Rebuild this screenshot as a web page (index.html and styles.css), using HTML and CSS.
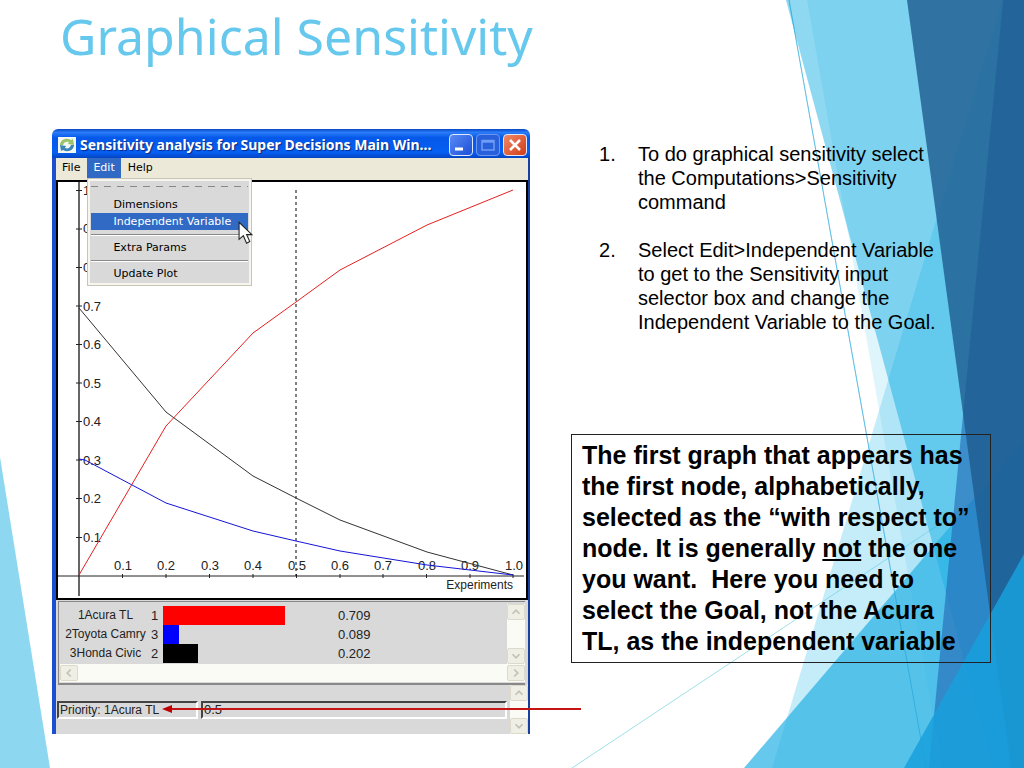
FILE: index.html
```html
<!DOCTYPE html>
<html lang="en">
<head>
    <meta charset="UTF-8">
    <meta name="viewport" content="width=device-width, initial-scale=1.0">
    <title>Graphical Sensitivity</title>
    <link rel="stylesheet" href="styles.css">
</head>
<body>
    <div class="slide">
        <svg class="backdrop" viewBox="0 0 1024 768" preserveAspectRatio="none" aria-hidden="true">
            <polygon points="0,457 50,768 0,768" fill="#8dd8f0"/>
            <path d="M789 0L926 768" stroke="#7ccfee" fill="none"/>
            <path d="M572 768L1024 468" stroke="#9fe0ea" fill="none"/>
            <polygon points="1002,0 1024,0 1024,768 772,768" fill="#5fcbef" fill-opacity=".36"/>
            <polygon points="807,0 1024,0 1024,768 942,768" fill="#5fcbef" fill-opacity=".2"/>
            <polygon points="786,0 1024,0 1024,768 993,768" fill="#06a8e0" fill-opacity=".45"/>
            <polygon points="744,768 1024,440 1024,768" fill="#25b1e4" fill-opacity=".7"/>
            <polygon points="1003,0 1024,0 1024,768 929,768" fill="#2366b2" fill-opacity=".6"/>
            <polygon points="907,0 1024,0 1024,768 1011,768" fill="#1d5b8f" fill-opacity=".8"/>
            <polygon points="904,768 1024,554 1024,768" fill="#19a0dd" fill-opacity=".85"/>
            <path d="M789 0L926 768" stroke="#2a9fd0" stroke-opacity=".35" fill="none"/>
        </svg>

        <div class="content">
            <h1>Graphical Sensitivity</h1>

            <main>
                <section class="window">
                    <header class="titlebar">
                        <svg class="app-icon" viewBox="0 0 18 16">
                            <rect width="18" height="16" fill="#f4f8f4"/>
                            <path d="M2 8C2 3 8 0 13 3L15 2L16 8L10 7L11 5C8 4 6 5 5 8Z" fill="#9bc46a"/>
                            <path d="M16 8C16 13 10 16 5 13L3 14L2 8L8 9L7 11C10 12 12 11 13 8Z" fill="#3a86b8"/>
                        </svg>
                        <h2>Sensitivity analysis for Super Decisions Main Win...</h2>
                        <div class="controls">
                            <button class="control" aria-label="Minimize">
                                <svg viewBox="0 0 20 20"><path d="M4 14H12" stroke="#fff" stroke-width="3"/></svg>
                            </button>
                            <button class="control maximize" aria-label="Maximize" disabled>
                                <svg viewBox="0 0 20 20"><path d="M4 5.500H16V15H4ZM4 7H16" stroke="#6f9df5" stroke-width="1.500" fill="none"/></svg>
                            </button>
                            <button class="control close" aria-label="Close">
                                <svg viewBox="0 0 20 20"><path d="M5 5L15 15M15 5L5 15" stroke="#fff" stroke-width="2.500"/></svg>
                            </button>
                        </div>
                    </header>

                    <div class="window-body">
                        <nav class="menubar">
                            <button>File</button>
                            <div class="menu-open">
                                <button class="active">Edit</button>
                                <div class="dropdown">
                                    <div class="tearoff"></div>
                                    <button>Dimensions</button>
                                    <button class="active">Independent Variable</button>
                                    <hr>
                                    <button>Extra Params</button>
                                    <hr>
                                    <button>Update Plot</button>
                                    <svg class="cursor" viewBox="0 0 14 22"><path d="M1 1V17L5 13.500L8 20.500L11 19L8 12.500H13Z" fill="#fff" stroke="#222"/></svg>
                                </div>
                            </div>
                            <button>Help</button>
                        </nav>

                        <svg class="chart" viewBox="56 180 472 420">
                            <rect x="57" y="181" width="470" height="418" fill="#fff" stroke="#000" stroke-width="2"/>
                            <g class="axis">
                                <path d="M79 182V596" stroke-width="2" stroke="#666"/>
                                <path d="M58 576H524"/>
                                <path d="M76 190.500H82M76 229H82M76 267.500H82M76 306H82M76 344.500H82M76 383H82M76 421.500H82M76 460H82M76 498.500H82M76 537.500H82"/>
                                <path d="M122.500 574V578M166 574V578M209.500 574V578M253 574V578M296.500 574V578M340 574V578M383 574V578M426.500 574V578M470 574V578M513 574V578"/>
                            </g>
                            <g class="y-labels">
                                <text x="83" y="195">1.0</text>
                                <text x="83" y="233">0.9</text>
                                <text x="83" y="272">0.8</text>
                                <text x="83" y="311">0.7</text>
                                <text x="83" y="349">0.6</text>
                                <text x="83" y="388">0.5</text>
                                <text x="83" y="426">0.4</text>
                                <text x="83" y="465">0.3</text>
                                <text x="83" y="503">0.2</text>
                                <text x="83" y="542">0.1</text>
                            </g>
                            <g class="x-labels">
                                <text x="123" y="570">0.1</text>
                                <text x="166" y="570">0.2</text>
                                <text x="210" y="570">0.3</text>
                                <text x="253" y="570">0.4</text>
                                <text x="297" y="570">0.5</text>
                                <text x="340" y="570">0.6</text>
                                <text x="383" y="570">0.7</text>
                                <text x="427" y="570">0.8</text>
                                <text x="470" y="570">0.9</text>
                                <text x="514" y="570">1.0</text>
                            </g>
                            <text class="axis-name" x="513" y="589">Experiments</text>
                            <path d="M296 190V576" stroke="#000" stroke-dasharray="3 3"/>
                            <g class="series">
                                <polyline stroke="#333" points="79,308 166,412 253,476 296,498 340,520 427,552 513,575"/>
                                <polyline stroke="#1414d8" points="79,459 85,460 166,503 253,531 296,541 340,551 427,565 513,575"/>
                                <polyline stroke="#e62020" points="79,575 166,426 253,333 296,302 340,270 427,225 513,190"/>
                            </g>
                        </svg>

                        <div class="results">
                            <table>
                                <tr><th>1Acura TL</th><td class="rank">1</td><td class="bar-cell"><div class="bar red" style="width:122px"></div></td><td>0.709</td></tr>
                                <tr><th>2Toyota Camry</th><td class="rank">3</td><td class="bar-cell"><div class="bar blue" style="width:16px"></div></td><td>0.089</td></tr>
                                <tr><th>3Honda Civic</th><td class="rank">2</td><td class="bar-cell"><div class="bar black" style="width:35px"></div></td><td>0.202</td></tr>
                            </table>
                            <div class="scroll-v">
                                <button aria-label="Scroll up"><svg viewBox="0 0 16 16"><path d="M4 10L8 6L12 10"/></svg></button>
                                <button aria-label="Scroll down"><svg viewBox="0 0 16 16"><path d="M4 6L8 10L12 6"/></svg></button>
                            </div>
                            <div class="scroll-h">
                                <button aria-label="Scroll left"><svg viewBox="0 0 16 16"><path d="M10 4L6 8L10 12"/></svg></button>
                                <button aria-label="Scroll right"><svg viewBox="0 0 16 16"><path d="M6 4L10 8L6 12"/></svg></button>
                            </div>
                        </div>

                        <div class="status">
                            <label for="priority">Priority: 1Acura TL</label>
                            <input type="text" id="priority" value="0.5">
                            <div class="scroll-v">
                                <button aria-label="Scroll up"><svg viewBox="0 0 16 16"><path d="M4 10L8 6L12 10"/></svg></button>
                                <button aria-label="Scroll down"><svg viewBox="0 0 16 16"><path d="M4 6L8 10L12 6"/></svg></button>
                            </div>
                            <svg class="arrow" viewBox="0 0 420 10">
                                <path d="M8 5H419" stroke="#c41414" stroke-width="2"/>
                                <path d="M0 5L10 1V9Z" fill="#c00000"/>
                            </svg>
                        </div>
                    </div>
                </section>

                <section class="notes">
                    <ol>
                        <li>To do graphical sensitivity select the Computations&gt;Sensitivity command</li>
                        <li>Select Edit&gt;Independent Variable to get to the Sensitivity input selector box and change the Independent Variable to the Goal.</li>
                    </ol>
                    <p class="callout">The first graph that appears has the first node, alphabetically, selected as the “with respect to” node. It is generally <u>not</u> the one you want.&nbsp; Here you need to select the Goal, not the Acura TL, as the independent variable</p>
                </section>
            </main>
        </div>
    </div>
</body>
</html>
```

FILE: styles.css
```css
* {
    box-sizing: border-box;
}
body {
    margin: 0;
    background-color: #fff;
    color: #000;
    font-family: "Liberation Sans", Arial, sans-serif;
}
button {
    padding: 0;
    border: none;
    background: none;
    color: inherit;
    font: inherit;
}
svg {
    display: block;
}

/* the backdrop and the content share one grid cell */
.slide {
    display: grid;
    min-height: 100vh;
    overflow: hidden;
}
.backdrop, .content {
    grid-area: 1 / 1;
    min-width: 0;
}
.backdrop {
    width: 100%;
    height: 100%;
    min-height: 0;
    contain: size;
}
h1 {
    margin: 0;
    padding: 0 60px;
    height: 129px;
    font-family: "Noto Sans", sans-serif;
    font-size: 50px;
    font-weight: 400;
    line-height: 72px;
    color: #66c8ec;
}
main {
    display: grid;
    grid-template-columns: minmax(0, 478px) minmax(0, 420px);
    gap: 41px;
    align-items: start;
    padding: 0 33px 0 52px;
}

/* window */
.titlebar {
    display: flex;
    align-items: center;
    gap: 4px;
    height: 29px;
    padding: 2px 3px 0 6px;
    border-radius: 6px 6px 0 0;
    background: linear-gradient(#0a48c8, #2a7cf8 12%, #0558e8 30%, #0560f4 80%, #0444c0);
}
.app-icon {
    width: 18px;
    height: 16px;
    flex: none;
}
.titlebar h2 {
    flex: 1;
    margin: 0;
    overflow: hidden;
    font-family: "Noto Sans", sans-serif;
    font-size: 14px;
    font-weight: 700;
    line-height: 20px;
    white-space: nowrap;
    color: #fff;
    text-shadow: 1px 1px 1px #0a2a80;
}
.controls {
    display: flex;
    gap: 3px;
}
.control {
    width: 24px;
    height: 22px;
    border: 1px solid #dfe8fc;
    border-radius: 4px;
    background: linear-gradient(135deg, #5a8af4, #1a4fd8);
}
.control svg {
    width: 20px;
    height: 20px;
    margin: auto;
}
.maximize {
    border-color: #6a98f4;
    background: #2860dc;
}
.close {
    background: linear-gradient(135deg, #f08a68, #d03c18);
}
.window-body {
    border-left: 4px solid #1c4fd0;
    border-right: 2px solid #1840a0;
    background-color: #d9d9d9;
}
.menubar {
    display: flex;
    gap: 1px;
    height: 22px;
    background-color: #ece9d8;
    font-family: "DejaVu Sans", sans-serif;
    font-size: 11px;
    line-height: 20px;
}
.menubar > button, .menu-open > button {
    height: 20px;
    padding: 0 6px;
}
.menubar .active {
    background-color: #316ac5;
    color: #fff;
}
.menu-open {
    position: relative;
}
.dropdown {
    position: absolute;
    top: 20px;
    left: 0;
    width: 165px;
    padding: 4px 3px 3px;
    border: 1px solid #c8c5b8;
    background-color: #d9d9d9;
    box-shadow: inset 0 0 0 2px #f6f5ee;
}
.dropdown button {
    display: block;
    width: 100%;
    height: 17px;
    padding-left: 22px;
    line-height: 17px;
    text-align: left;
}
.dropdown hr {
    height: 2px;
    margin: 4px 0 3px;
    border: none;
    border-top: 1px solid #888;
    background-color: #fff;
}
.tearoff {
    height: 10px;
    margin-top: 3px;
    background: repeating-linear-gradient(90deg, #888 0 7px, transparent 7px 13px) top / 100% 1px no-repeat;
}
.cursor {
    position: absolute;
    top: 42px;
    left: 150px;
    width: 15px;
    height: 24px;
}

/* plot */
.chart {
    width: 100%;
    font-size: 13px;
    fill: #222;
}
.axis {
    stroke: #222;
    fill: none;
}
.x-labels {
    text-anchor: middle;
}
.axis-name {
    font-size: 12px;
    text-anchor: end;
}
.series {
    fill: none;
    stroke-width: 1;
}

/* results */
.results {
    display: grid;
    grid-template-columns: 1fr 18px;
    grid-template-rows: 60px auto;
    margin: 1px 3px 0 2px;
    padding: 2px 0 1px 1px;
    border-top: 1px solid #888;
    border-left: 1px solid #888;
    border-bottom: 2px solid #888;
    font-size: 13px;
    color: #222;
}
table {
    width: 100%;
    align-self: center;
    border-collapse: collapse;
    table-layout: fixed;
}
td, th {
    height: 19px;
    padding: 0;
    line-height: 19px;
}
th {
    width: 91px;
    font-size: 12px;
    font-weight: 400;
    text-align: center;
}
.rank {
    width: 12px;
}
.bar-cell {
    width: 175px;
}
.bar {
    height: 19px;
}
.red {
    background-color: #f00;
}
.blue {
    background-color: #00f;
}
.black {
    background-color: #000;
}
.scroll-v, .scroll-h {
    display: flex;
    justify-content: space-between;
    background-color: #fbfbf6;
}
.scroll-v {
    flex-direction: column;
}
.scroll-h {
    grid-column: 1 / 3;
    padding: 1px 0;
}
.scroll-v button, .scroll-h button {
    width: 18px;
    height: 16px;
    border: 1px solid #dddacb;
    border-radius: 2px;
    background-color: #f0efe6;
}
.scroll-v svg, .scroll-h svg {
    width: 14px;
    height: 14px;
    margin: auto;
    fill: none;
    stroke: #c4c2b4;
    stroke-width: 2;
}

/* status line */
.status {
    position: relative;
    display: grid;
    grid-template-columns: 141px 1fr 18px;
    gap: 3px;
    align-items: center;
    height: 49px;
    padding-left: 1px;
    font-size: 12px;
}
.status label, .status input {
    height: 18px;
    padding: 0 1px;
    border: 2px solid;
    border-color: #444 #fff #fff #444;
    background-color: #d9d9d9;
    color: #222;
    line-height: 15px;
}
.status input {
    width: 100%;
    border-radius: 0;
    font: inherit;
    font-size: 13px;
}
.status .scroll-v {
    height: 100%;
}
.arrow {
    position: absolute;
    top: 19px;
    left: 106px;
    width: 420px;
    height: 10px;
}

/* notes */
ol {
    margin: 13px 0 0;
    padding: 0 50px 0 28px;
    list-style: none;
    counter-reset: step;
    font-size: 20px;
    line-height: 24px;
}
li {
    display: grid;
    grid-template-columns: 39px 1fr;
    counter-increment: step;
}
li::before {
    content: counter(step) ".";
}
li + li {
    margin-top: 24px;
}
.callout {
    margin: 100px 0 0;
    padding: 5px 16px 5px 10px;
    border: 1px solid #222;
    font-size: 25px;
    font-weight: 700;
    line-height: 31px;
}
```
